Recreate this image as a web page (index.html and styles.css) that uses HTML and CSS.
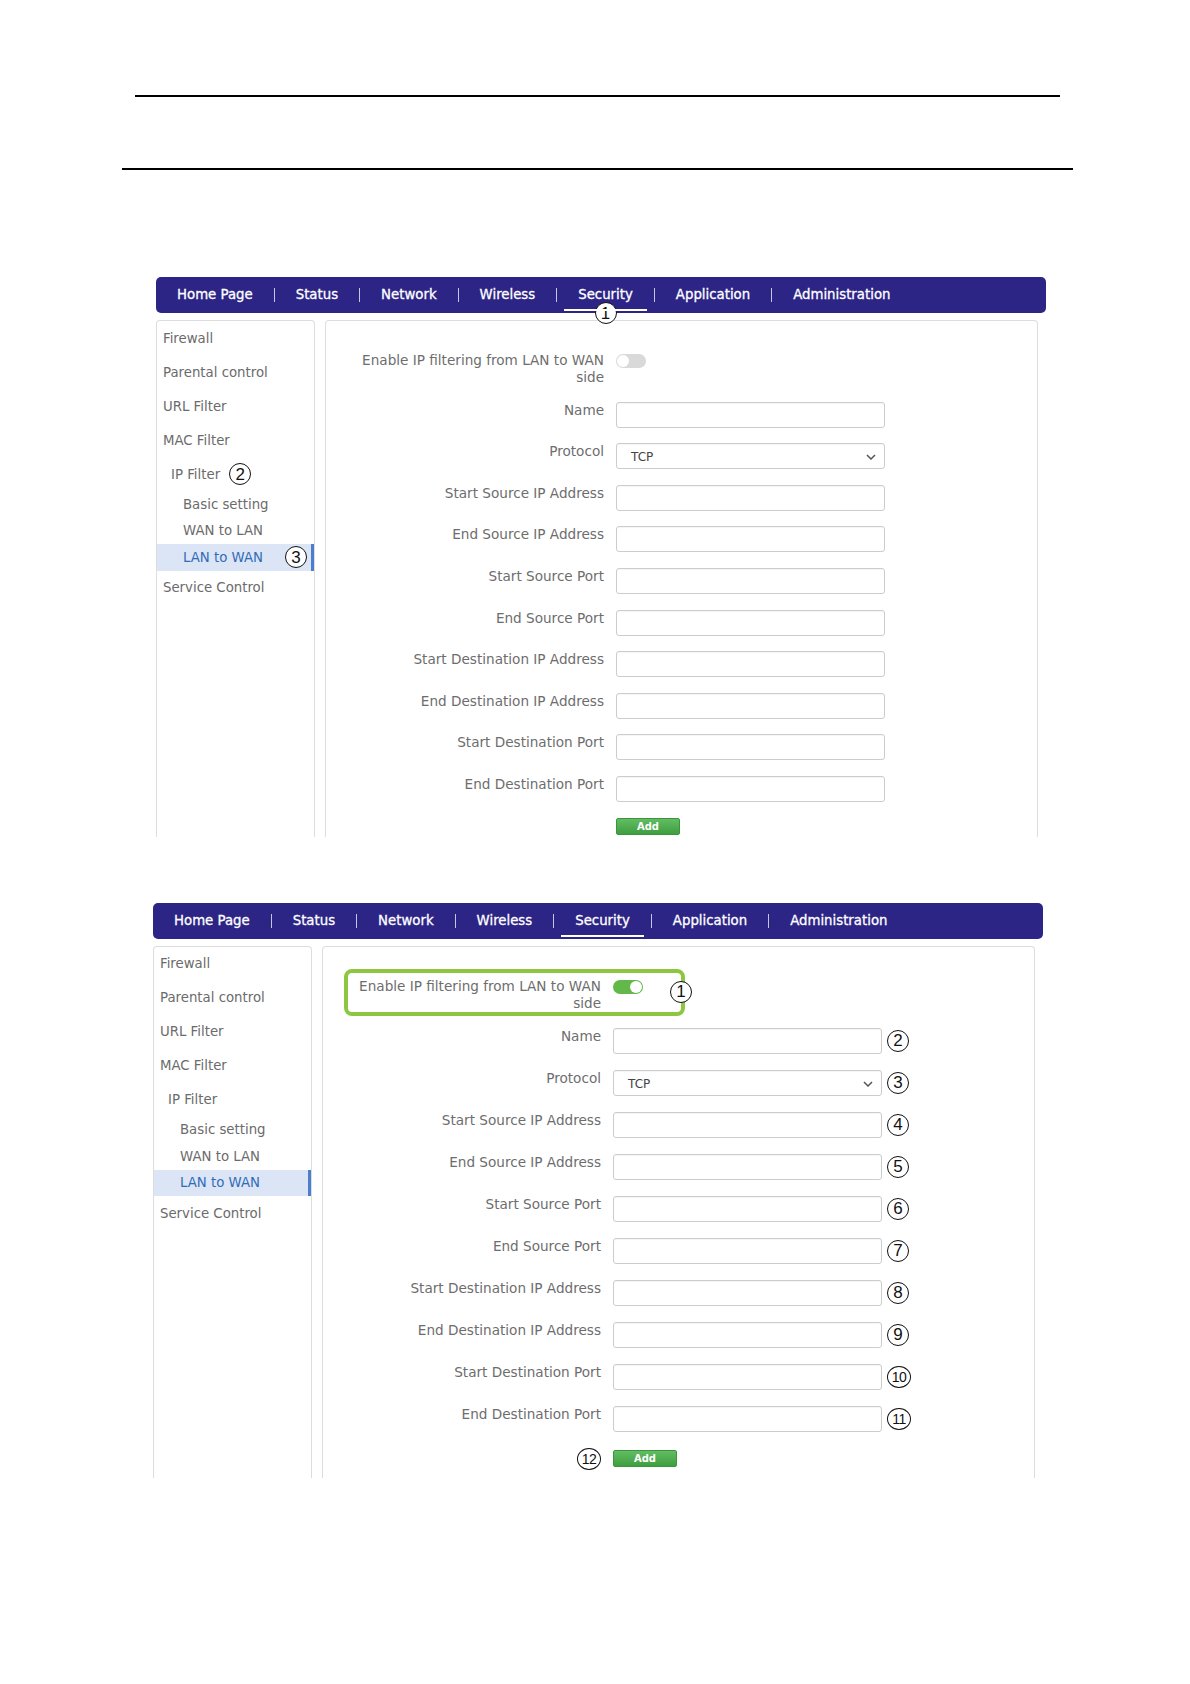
FILE: index.html
```html
<!DOCTYPE html>
<html lang="en">
<head>
    <meta charset="UTF-8">
    <meta name="viewport" content="width=device-width, initial-scale=1.0">
    <title>IP Filter - LAN to WAN</title>
    <link rel="stylesheet" href="styles.css">
</head>
<body>
    <div class="page-rule top"></div>
    <div class="page-rule bottom"></div>

    <!-- screenshot 1: menu path -->
    <section class="shot shot-first">
        <nav class="topnav">
            <a href="#">Home Page</a>
            <a href="#">Status</a>
            <a href="#">Network</a>
            <a href="#">Wireless</a>
            <a href="#" class="active">Security<span class="num num-nav">1</span></a>
            <a href="#">Application</a>
            <a href="#">Administration</a>
        </nav>
        <div class="shot-body">
            <ul class="sidemenu">
                <li>Firewall</li>
                <li>Parental control</li>
                <li>URL Filter</li>
                <li>MAC Filter</li>
                <li class="group">IP Filter<span class="num num-ip">2</span></li>
                <li class="sub">Basic setting</li>
                <li class="sub">WAN to LAN</li>
                <li class="sub current">LAN to WAN<span class="num num-end">3</span></li>
                <li>Service Control</li>
            </ul>
            <div class="content">
                <form class="ipf-form">
                    <div class="form-row">
                        <label>Enable IP filtering from LAN to WAN side</label>
                        <span class="switch"><span class="knob"></span></span>
                    </div>
                    <div class="form-row"><label>Name</label><div class="field"></div></div>
                    <div class="form-row">
                        <label>Protocol</label>
                        <div class="field select">
                            <span>TCP</span>
                            <svg width="10" height="6" viewBox="0 0 10 6"><path d="M1 1l4 4 4-4" fill="none" stroke="#555" stroke-width="1.5"/></svg>
                        </div>
                    </div>
                    <div class="form-row"><label>Start Source IP Address</label><div class="field"></div></div>
                    <div class="form-row"><label>End Source IP Address</label><div class="field"></div></div>
                    <div class="form-row"><label>Start Source Port</label><div class="field"></div></div>
                    <div class="form-row"><label>End Source Port</label><div class="field"></div></div>
                    <div class="form-row"><label>Start Destination IP Address</label><div class="field"></div></div>
                    <div class="form-row"><label>End Destination IP Address</label><div class="field"></div></div>
                    <div class="form-row"><label>Start Destination Port</label><div class="field"></div></div>
                    <div class="form-row"><label>End Destination Port</label><div class="field"></div></div>
                    <div class="form-row add-row">
                        <div class="lbl"></div>
                        <button type="button" class="btn-add">Add</button>
                    </div>
                </form>
            </div>
        </div>
    </section>

    <!-- screenshot 2: field callouts -->
    <section class="shot shot-second">
        <nav class="topnav">
            <a href="#">Home Page</a>
            <a href="#">Status</a>
            <a href="#">Network</a>
            <a href="#">Wireless</a>
            <a href="#" class="active">Security</a>
            <a href="#">Application</a>
            <a href="#">Administration</a>
        </nav>
        <div class="shot-body">
            <ul class="sidemenu">
                <li>Firewall</li>
                <li>Parental control</li>
                <li>URL Filter</li>
                <li>MAC Filter</li>
                <li class="group">IP Filter</li>
                <li class="sub">Basic setting</li>
                <li class="sub">WAN to LAN</li>
                <li class="sub current">LAN to WAN</li>
                <li>Service Control</li>
            </ul>
            <div class="content">
                <form class="ipf-form">
                    <div class="form-row framed">
                        <label>Enable IP filtering from LAN to WAN side</label>
                        <span class="switch on"><span class="knob"></span></span>
                        <span class="num num-toggle">1</span>
                    </div>
                    <div class="form-row"><label>Name</label><div class="field"></div><span class="num">2</span></div>
                    <div class="form-row">
                        <label>Protocol</label>
                        <div class="field select">
                            <span>TCP</span>
                            <svg width="10" height="6" viewBox="0 0 10 6"><path d="M1 1l4 4 4-4" fill="none" stroke="#555" stroke-width="1.5"/></svg>
                        </div>
                        <span class="num">3</span>
                    </div>
                    <div class="form-row"><label>Start Source IP Address</label><div class="field"></div><span class="num">4</span></div>
                    <div class="form-row"><label>End Source IP Address</label><div class="field"></div><span class="num">5</span></div>
                    <div class="form-row"><label>Start Source Port</label><div class="field"></div><span class="num">6</span></div>
                    <div class="form-row"><label>End Source Port</label><div class="field"></div><span class="num">7</span></div>
                    <div class="form-row"><label>Start Destination IP Address</label><div class="field"></div><span class="num">8</span></div>
                    <div class="form-row"><label>End Destination IP Address</label><div class="field"></div><span class="num">9</span></div>
                    <div class="form-row"><label>Start Destination Port</label><div class="field"></div><span class="num wide">10</span></div>
                    <div class="form-row"><label>End Destination Port</label><div class="field"></div><span class="num wide">11</span></div>
                    <div class="form-row add-row">
                        <div class="lbl"><span class="num wide">12</span></div>
                        <button type="button" class="btn-add">Add</button>
                    </div>
                </form>
            </div>
        </div>
    </section>
</body>
</html>
```

FILE: styles.css
```css
* {
    box-sizing: border-box;
}

body {
    margin: 0;
    font-family: "DejaVu Sans", Verdana, sans-serif;
    background: #fff;
}

.page-rule {
    height: 2px;
    background: #000;
}

.page-rule.top {
    width: 925px;
    margin: 95px 0 0 135px;
}

.page-rule.bottom {
    width: 951px;
    margin: 71px 0 0 122px;
}

.shot {
    width: 890px;
}

.shot-first {
    margin: 107px 0 0 156px;
}

.shot-second {
    margin: 66px 0 0 153px;
}

/* top menu */
.topnav {
    display: flex;
    align-items: center;
    height: 36px;
    background: #2d2586;
    border-radius: 5px;
}

.topnav a {
    position: relative;
    padding: 0 21px;
    line-height: 14px;
    font-size: 13.3px;
    color: #fff;
    text-decoration: none;
    -webkit-text-stroke: 0.3px #fff;
}

.topnav a + a {
    border-left: 1px solid #c8c5e4;
}

.topnav a.active::after {
    content: "";
    position: absolute;
    left: 7px;
    right: 7px;
    top: 21px;
    height: 2px;
    background: #fff;
}

.shot-body {
    display: flex;
    gap: 10px;
    width: 882px;
    margin-top: 7px;
}

/* left menu */
.sidemenu {
    width: 159px;
    flex: none;
    margin: 0;
    padding: 0;
    list-style: none;
    border: 1px solid #ddd;
    border-bottom: none;
    border-radius: 4px 4px 0 0;
    font-size: 13.3px;
    color: #6b6b6b;
}

.sidemenu li {
    display: flex;
    align-items: center;
    height: 34px;
    padding-left: 6px;
}

.sidemenu li.group {
    padding-left: 14px;
}

.sidemenu li.sub {
    height: 26.5px;
    padding-left: 26px;
}

.sidemenu li.current {
    background: #dce5f5;
    color: #2f6cb8;
    box-shadow: inset -3px 0 #4a7fcf;
}

/* main panel */
.content {
    flex: 1;
    border: 1px solid #ddd;
    border-bottom: none;
    border-radius: 4px 4px 0 0;
    padding: 31px 0 2px 30px;
}

.shot-second .content {
    padding-bottom: 8px;
}

.ipf-form {
    display: flex;
    flex-direction: column;
    gap: 15.6px;
}

.shot-second .ipf-form {
    gap: 16px;
}

.form-row {
    display: flex;
    align-items: flex-start;
}

.form-row label,
.form-row .lbl {
    width: 248px;
    flex: none;
    text-align: right;
    font-size: 13.6px;
    line-height: 17px;
    color: #6d6d6d;
}

.field {
    width: 269px;
    height: 26px;
    margin-left: 12px;
    flex: none;
    border: 1px solid #ccc;
    border-radius: 3px;
    background: #fff;
    box-shadow: inset 0 1px 1px rgba(0, 0, 0, 0.04);
}

.field.select {
    display: flex;
    align-items: center;
    justify-content: space-between;
    padding: 2px 8px 0 14px;
    font-size: 12px;
    color: #444;
}

.switch {
    display: flex;
    align-items: center;
    width: 30px;
    height: 14px;
    margin: 2px 0 0 12px;
    padding: 1px;
    flex: none;
    border-radius: 7px;
    background: #d9d9d9;
}

.switch .knob {
    width: 12px;
    height: 12px;
    border-radius: 50%;
    background: #fff;
}

.switch.on {
    justify-content: flex-end;
    background: #62b94a;
}

.add-row {
    align-items: center;
}

.add-row .lbl {
    display: flex;
    justify-content: flex-end;
}

.btn-add {
    width: 64px;
    height: 17px;
    margin-left: 12px;
    padding: 0;
    border: 1px solid #3c943c;
    border-radius: 2px;
    background: linear-gradient(#62bd62, #3f9e3f);
    color: #fff;
    font-family: "DejaVu Sans", Verdana, sans-serif;
    font-size: 10px;
    font-weight: bold;
}

/* highlight frame around the enable switch */
.form-row.framed {
    position: relative;
    width: fit-content;
}

.form-row.framed::before {
    content: "";
    position: absolute;
    top: -9px;
    left: -9px;
    right: 7px;
    bottom: -4px;
    border: 4px solid #8dc641;
    border-radius: 8px;
}

/* callout numbers */
.num {
    position: relative;
    display: inline-flex;
    align-items: center;
    justify-content: center;
    width: 22px;
    height: 22px;
    flex: none;
    margin: 2px 0 0 5px;
    border: 1.2px solid #111;
    border-radius: 50%;
    background: #fff;
    font-family: "Liberation Sans", Arial, sans-serif;
    font-size: 17px;
    font-weight: normal;
    line-height: 1;
    color: #111;
}

.num.wide {
    width: 24px;
    font-size: 14px;
    letter-spacing: -0.5px;
}

.add-row .num {
    margin: 0;
}

.num-nav {
    position: absolute;
    left: 50%;
    top: 14px;
    margin: 0 0 0 -11px;
    -webkit-text-stroke: 0;
}

.num-ip {
    margin: 0 0 0 9px;
}

.num-end {
    margin: 0 7px 0 auto;
}

.num-toggle {
    margin: 3px 0 0 27px;
}
```
